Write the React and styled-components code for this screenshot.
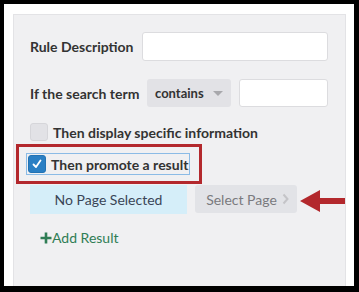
import React from "react";
import styled, { createGlobalStyle } from "styled-components";

const Global = createGlobalStyle`
  html, body { margin: 0; padding: 0; background: #000; }
  body { font-family: Lato, "Open Sans", sans-serif; }
  * { box-sizing: border-box; }
`;

const Frame = styled.div`
  margin: 4px 0 0 4px;
  width: 350px;
  height: 282px;
  background: #fff;
  overflow: hidden;
`;

const Panel = styled.div`
  position: relative;
  margin: 10px 0 0 9px;
  width: 333px;
  height: 300px;
  background: #f0f0f2;
  border: 1px solid #e3e3e6;
  padding: 17px 17px 0 16px;
  display: flex;
  flex-direction: column;
`;

const Row = styled.div`
  display: flex;
  align-items: center;
  margin-top: ${(p) => p.$mt || 0}px;
`;

const Label = styled.span`
  font-weight: 700;
  font-size: 14px;
  color: #333;
  white-space: nowrap;
`;

const Right = styled.div`
  margin-left: auto;
  display: flex;
  gap: 8px;
`;

const Input = styled.div`
  width: ${(p) => p.$w}px;
  height: ${(p) => p.$h}px;
  background: #fff;
  border: 1px solid #dcdcdf;
  border-radius: 3px;
`;

const Select = styled.div`
  width: 84px;
  height: 28px;
  background: #e2e2e6;
  border-radius: 3px;
  display: flex;
  align-items: center;
  padding: 0 0 0 8px;
  font-size: 13px;
  font-weight: 700;
  color: #333;
`;

const Caret = styled.span`
  margin-left: auto;
  margin-right: 8px;
  width: 0;
  height: 0;
  border-left: 5px solid transparent;
  border-right: 5px solid transparent;
  border-top: 5px solid #a8a8ac;
`;

const Box = styled.span`
  width: 18px;
  height: 18px;
  border-radius: 3px;
  flex: none;
  background: ${(p) => (p.$checked ? "#2a7fc4" : "#e2e2e6")};
  border: 1px solid ${(p) => (p.$checked ? "#2472b2" : "#d6d6da")};
  display: flex;
  align-items: center;
  justify-content: center;
  margin-right: 5px;
`;

const Highlight = styled.div`
  align-self: flex-start;
  margin: 3px 0 0 -14px;
  border: 3px solid #b3282d;
  padding: 7px 10px 7px 8px;
`;

const FocusLabel = styled.div`
  display: flex;
  align-items: center;
  outline: 1px solid #8bbbe6;
  padding: 1px;
`;

const Buttons = styled.div`
  display: flex;
  gap: 8px;
  margin-top: 1px;
  align-items: flex-start;
`;

const NoPage = styled.div`
  width: 157px;
  height: 29px;
  background: #d5eef9;
  display: flex;
  align-items: center;
  justify-content: center;
  font-size: 14px;
  color: #3a4556;
`;

const SelectPage = styled.div`
  width: 102px;
  height: 28px;
  background: #e2e3e7;
  border-radius: 3px;
  display: flex;
  align-items: center;
  justify-content: center;
  gap: 5px;
  padding-left: 3px;
  font-size: 14px;
  color: #7a7a7e;
`;

const AddResult = styled.div`
  margin: 15px 0 0 10px;
  display: flex;
  align-items: center;
  font-size: 14px;
  color: #2f7d55;
`;

const Arrow = styled.svg`
  position: absolute;
  left: 285px;
  top: 172px;
`;

export default function App() {
  return (
    <>
      <Global />
      <Frame>
        <Panel>
          <Row>
            <Label>Rule Description</Label>
            <Right>
              <Input $w={186} $h={29} />
            </Right>
          </Row>
          <Row $mt={18}>
            <Label>If the search term</Label>
            <Right>
              <Select>
                contains
                <Caret />
              </Select>
              <Input $w={89} $h={28} />
            </Right>
          </Row>
          <Row $mt={16}>
            <Box />
            <Label>Then display specific information</Label>
          </Row>
          <Highlight>
            <FocusLabel>
              <Box $checked>
                <svg width="12" height="12" viewBox="0 0 12 12">
                  <path d="M2.5 6.5 L5 9 L9.5 2.5" stroke="#fff" strokeWidth="1.8" fill="none" strokeLinecap="round" strokeLinejoin="round" />
                </svg>
              </Box>
              <Label>Then promote a result</Label>
            </FocusLabel>
          </Highlight>
          <Buttons>
            <NoPage>No Page Selected</NoPage>
            <SelectPage>
              Select Page
              <svg width="7" height="12" viewBox="0 0 7 12">
                <path d="M1.5 1.5 L5.5 6 L1.5 10.5" stroke="#c4c4c8" strokeWidth="2" fill="none" />
              </svg>
            </SelectPage>
          </Buttons>
          <AddResult>
            <svg width="12" height="12" viewBox="0 0 12 12">
              <path d="M6 0.5 V11.5 M0.5 6 H11.5" stroke="#2f7d55" strokeWidth="2.6" />
            </svg>
            Add Result
          </AddResult>
          <Arrow width="46" height="30" viewBox="0 0 46 30">
            <polygon points="1,14 21,3 21,11 46,11 46,17 21,17 21,25" fill="#b3282d" />
          </Arrow>
        </Panel>
      </Frame>
    </>
  );
}
